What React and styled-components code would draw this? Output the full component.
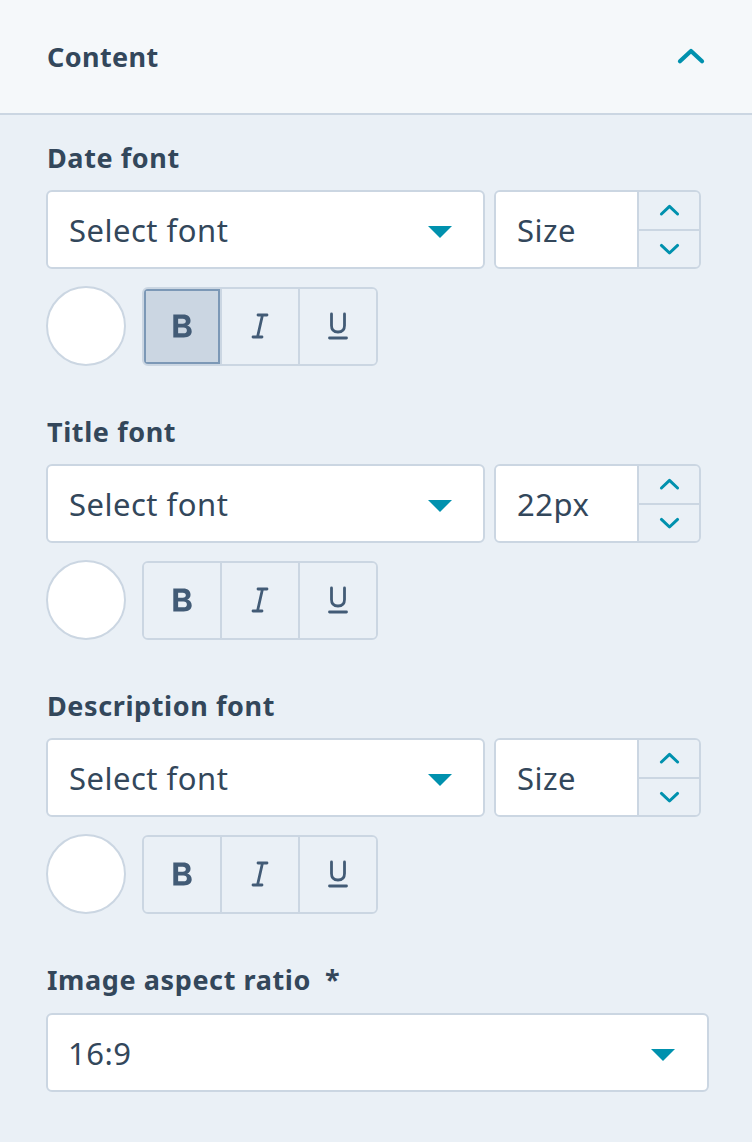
import React from 'react'
import { styled, createGlobalStyle } from 'styled-components'

const Global = createGlobalStyle`
  html, body { margin: 0; padding: 0; }
  body {
    background: #eaf0f6;
    font-family: "Noto Sans", "Open Sans", sans-serif;
    color: #33475b;
  }
`;

const Panel = styled.div`
  width: 752px;
  min-height: 1142px;
  background: #eaf0f6;
`;

const Header = styled.div`
  height: 113px;
  display: flex;
  align-items: center;
  justify-content: space-between;
  padding: 0 48px 0 47px;
  background: #f5f8fa;
  border-bottom: 2px solid #cbd6e2;
  box-sizing: content-box;
`;

const HeaderTitle = styled.div`
  font-size: 27px;
  font-weight: 700;
  letter-spacing: 0.4px;
`;

const Body = styled.div`
  padding: 27px 43px 0 46px;
`;

const Section = styled.div`
  margin-bottom: 50px;
`;

const Label = styled.div`
  font-size: 27px;
  font-weight: 700;
  line-height: 32px;
  letter-spacing: 0.6px;
  margin-bottom: ${p => p.$gap || 16}px;
  padding-left: 1px;
`;

const Required = styled.span`
  margin-left: 14px;
`;

const Row = styled.div`
  display: flex;
  gap: 9px;
`;

const Select = styled.div`
  flex: ${p => p.$full ? '0 0 663px' : '0 0 439px'};
  height: 79px;
  box-sizing: border-box;
  background: #fff;
  border: 2px solid #cbd6e2;
  border-radius: 6px;
  display: flex;
  align-items: center;
  justify-content: space-between;
  padding: 0 ${p => p.$full ? 32 : 31}px 0 ${p => p.$full ? 20 : 21}px;
  font-size: 31px;
  letter-spacing: 0.5px;
`;

const Caret = styled.span`
  width: 0;
  height: 0;
  border-left: 12px solid transparent;
  border-right: 12px solid transparent;
  border-top: 12px solid #0091ae;
  margin-top: 4px;
`;

const SizeBox = styled.div`
  flex: 0 0 207px;
  height: 79px;
  box-sizing: border-box;
  border: 2px solid #cbd6e2;
  border-radius: 6px;
  display: flex;
  overflow: hidden;
`;

const SizeValue = styled.div`
  flex: 1;
  background: #fff;
  display: flex;
  align-items: center;
  padding-left: 21px;
  font-size: 31px;
  letter-spacing: 0.5px;
`;

const Stepper = styled.div`
  width: 60px;
  border-left: 2px solid #cbd6e2;
  display: flex;
  flex-direction: column;
  background: #eaf0f6;
`;

const Step = styled.div`
  flex: 1;
  display: flex;
  align-items: center;
  justify-content: center;
  & + & { border-top: 2px solid #cbd6e2; }
`;

const Tools = styled.div`
  display: flex;
  align-items: center;
  gap: 16px;
  margin-top: 17px;
`;

const Swatch = styled.div`
  width: 80px;
  height: 80px;
  box-sizing: border-box;
  border-radius: 50%;
  background: #fff;
  border: 2px solid #cbd6e2;
`;

const Toggles = styled.div`
  display: flex;
  height: 79px;
  box-sizing: border-box;
  border: 2px solid #cbd6e2;
  border-radius: 6px;
  overflow: hidden;
`;

const Toggle = styled.div`
  width: 76px;
  display: flex;
  align-items: center;
  justify-content: center;
  color: #425b76;
  background: ${p => p.$on ? '#cbd6e2' : '#eaf0f6'};
  box-shadow: ${p => p.$on ? 'inset 0 0 0 2px #7c98b6' : 'none'};
  & + & { border-left: 2px solid #cbd6e2; }
`;

const Chevron = ({ up, size = 19, width = 3.2 }) => (
  <svg width={size} height={size * 0.55} viewBox="0 0 20 11" fill="none" overflow="visible">
    <path
      d={up ? 'M1.5 9.5 L10 1.5 L18.5 9.5' : 'M1.5 1.5 L10 9.5 L18.5 1.5'}
      stroke="#0091ae"
      strokeWidth={width}
      strokeLinecap="round"
      strokeLinejoin="round"
    />
  </svg>
);

const BoldIcon = () => (
  <svg width="23" height="30" viewBox="0 0 20 26">
    <path
      d="M2 3 H10.5 C15 3 17 5.2 17 8.4 C17 10.6 15.8 12 14 12.6 C16.4 13.2 18 15 18 17.6 C18 21 15.6 23 11 23 H2 Z M6.2 6.6 V11 H10.2 C12 11 12.9 10.2 12.9 8.8 C12.9 7.4 12 6.6 10.2 6.6 Z M6.2 14.4 V19.4 H10.8 C12.8 19.4 13.8 18.5 13.8 16.9 C13.8 15.3 12.8 14.4 10.8 14.4 Z"
      fill="#425b76"
      fillRule="evenodd"
    />
  </svg>
);

const ItalicIcon = () => (
  <svg width="20" height="28" viewBox="0 0 20 28" fill="none" stroke="#425b76" strokeWidth="2.8" strokeLinecap="round">
    <path d="M8 3 H17 M3 25 H12 M12.5 3 L7.5 25" />
  </svg>
);

const UnderlineIcon = () => (
  <svg width="22" height="30" viewBox="0 0 22 30" fill="none" stroke="#425b76" strokeWidth="2.8" strokeLinecap="round">
    <path d="M4.5 3 V14.5 C4.5 19 7.3 21 11 21 C14.7 21 17.5 19 17.5 14.5 V3 M2.5 27 H19.5" />
  </svg>
);

const FontField = ({ label, size, bold }) => (
  <Section>
    <Label>{label}</Label>
    <Row>
      <Select>
        <span>Select font</span>
        <Caret />
      </Select>
      <SizeBox>
        <SizeValue>{size}</SizeValue>
        <Stepper>
          <Step><Chevron up /></Step>
          <Step><Chevron /></Step>
        </Stepper>
      </SizeBox>
    </Row>
    <Tools>
      <Swatch />
      <Toggles>
        <Toggle $on={bold}><BoldIcon /></Toggle>
        <Toggle><ItalicIcon /></Toggle>
        <Toggle><UnderlineIcon /></Toggle>
      </Toggles>
    </Tools>
  </Section>
);

export default function App() {
  return (
    <Panel>
      <Global />
      <Header>
        <HeaderTitle>Content</HeaderTitle>
        <Chevron up size={26} width={3.2} />
      </Header>
      <Body>
        <FontField label="Date font" size="Size" bold />
        <FontField label="Title font" size="22px" />
        <FontField label="Description font" size="Size" />
        <Label $gap={17}>
          Image aspect ratio<Required>*</Required>
        </Label>
        <Row>
          <Select $full>
            <span>16:9</span>
            <Caret />
          </Select>
        </Row>
      </Body>
    </Panel>
  )
}
